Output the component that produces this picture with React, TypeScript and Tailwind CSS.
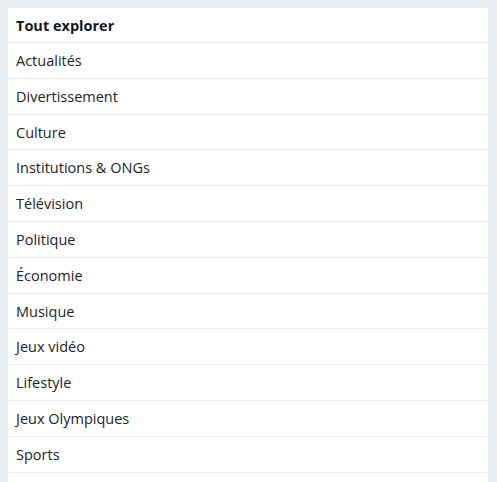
const categories = [
  'Actualités',
  'Divertissement',
  'Culture',
  'Institutions & ONGs',
  'Télévision',
  'Politique',
  'Économie',
  'Musique',
  'Jeux vidéo',
  'Lifestyle',
  'Jeux Olympiques',
  'Sports',
];

export default function App() {
  return (
    <div className="h-screen overflow-hidden bg-[#e6ecf0] pt-2 pl-2 pr-[9px] font-['Open_Sans',sans-serif] text-[#1f2326]">
      <div className="bg-white pb-6">
        <div className="flex h-[35px] items-center border-b border-[#e6ecf0] px-2 pt-px text-[14.5px] font-bold text-[#14171a]">
          Tout explorer
        </div>
        {categories.map((name) => (
          <div
            key={name}
            className="flex h-[35.8px] items-center border-b border-[#e6ecf0] px-2 pt-px text-[14.5px]"
          >
            {name}
          </div>
        ))}
      </div>
    </div>
  );
}
